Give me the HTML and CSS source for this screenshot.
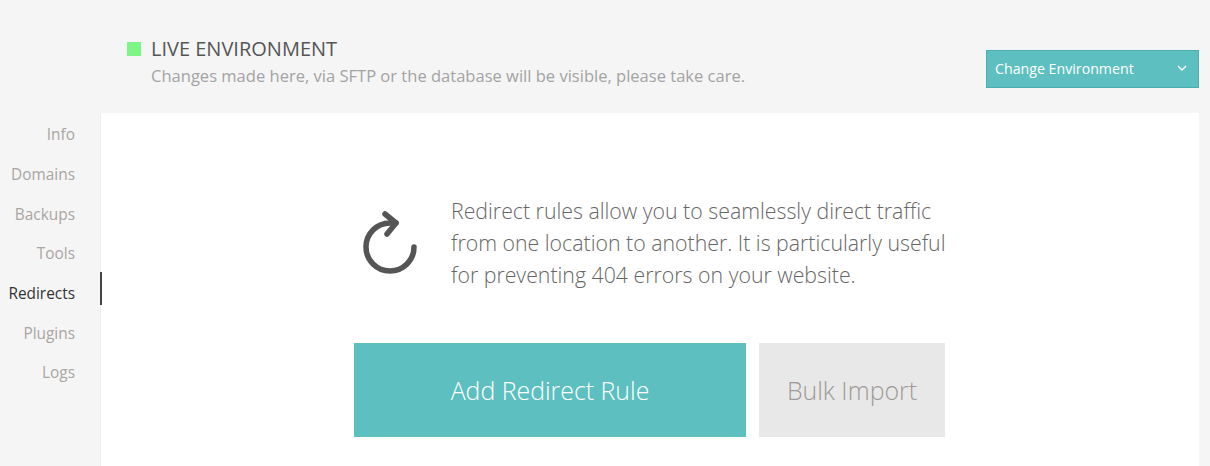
FILE: index.html
```html
<!DOCTYPE html>
<html lang="en">
<head>
    <meta charset="UTF-8">
    <title>Redirects</title>
    <link rel="stylesheet" href="styles.css">
</head>
<body>
    <header class="env-header">
        <span class="env-dot"></span>
        <div class="env-text">
            <h1>LIVE ENVIRONMENT</h1>
            <p>Changes made here, via SFTP or the database will be visible, please take care.</p>
        </div>
        <div class="env-select">
            <span>Change Environment</span>
            <svg width="10" height="6" viewBox="0 0 10 6"><path d="M1 1l4 4 4-4" fill="none" stroke="#fff" stroke-width="1.3"/></svg>
        </div>
    </header>

    <div class="layout">
        <nav class="side-nav">
            <a href="#">Info</a>
            <a href="#">Domains</a>
            <a href="#">Backups</a>
            <a href="#">Tools</a>
            <a href="#" class="active">Redirects</a>
            <a href="#">Plugins</a>
            <a href="#">Logs</a>
        </nav>

        <main class="panel">
            <div class="intro">
                <svg class="intro-icon" width="58" height="66" viewBox="0 0 58 66">
                    <path d="M54 37a24 24 0 1 1-24-24h6" fill="none" stroke="#555" stroke-width="5.5" stroke-linecap="round"/>
                    <path d="M25 4l11 9-9 11" fill="none" stroke="#555" stroke-width="5.5" stroke-linecap="round" stroke-linejoin="round"/>
                </svg>
                <p>Redirect rules allow you to seamlessly direct traffic from one location to another. It is particularly useful for preventing 404 errors on your website.</p>
            </div>
            <div class="actions">
                <a href="#" class="btn btn-primary">Add Redirect Rule</a>
                <a href="#" class="btn btn-muted">Bulk Import</a>
            </div>
        </main>
    </div>
</body>
</html>
```

FILE: styles.css
```css
* {
    box-sizing: border-box;
    margin: 0;
    padding: 0;
    font-family: 'Open Sans', Arial, sans-serif;
}

html, body {
    height: 100%;
}

body {
    background-color: #f5f5f5;
    overflow: hidden;
}

.env-header {
    display: flex;
    align-items: flex-start;
    height: 113px;
    padding: 36px 11px 0 127px;
}

.env-dot {
    width: 14px;
    height: 14px;
    margin-top: 6px;
    margin-right: 10px;
    background: #7df587;
}

.env-text {
    flex: 1;
}

.env-text h1 {
    font-size: 20px;
    line-height: 26px;
    font-weight: 400;
    color: #555;
}

.env-text p {
    font-size: 16.55px;
    line-height: 28px;
    color: #a3a3a3;
}

.env-select {
    display: flex;
    align-items: center;
    justify-content: space-between;
    width: 213px;
    height: 38px;
    margin-top: 14px;
    padding: 0 11px 2px 8px;
    background: #5dbfc0;
    border: 1px solid #4aaeb0;
    color: #fff;
    font-size: 14.2px;
}

.layout {
    display: flex;
    height: 353px;
    padding-right: 11px;
}

.side-nav {
    display: flex;
    flex-direction: column;
    flex-shrink: 0;
    position: relative;
    z-index: 1;
    width: 100px;
    padding-top: 2.3px;
    text-align: right;
}

.side-nav a {
    position: relative;
    height: 39.7px;
    line-height: 39px;
    padding-right: 25px;
    font-size: 15.4px;
    color: #aaa5a2;
    text-decoration: none;
}

.side-nav a.active {
    color: #333;
}

.side-nav a.active::after {
    content: "";
    position: absolute;
    top: -2px;
    right: -2px;
    width: 2px;
    height: 33px;
    background: #444;
}

.panel {
    flex: 1;
    background: #fff;
    border-left: 1px solid #eee;
    padding: 82px 0 0 253px;
}

.intro {
    display: flex;
    align-items: center;
    width: 596px;
}

.intro-icon {
    flex-shrink: 0;
    margin-left: 6px;
    margin-right: 33px;
}

.intro p {
    font-size: 21.3px;
    line-height: 32px;
    font-weight: 300;
    color: #666;
}

.actions {
    display: flex;
    gap: 13px;
    margin-top: 52px;
}

.btn {
    display: flex;
    align-items: center;
    justify-content: center;
    height: 94px;
    font-size: 24.9px;
    font-weight: 300;
    text-decoration: none;
}

.btn-primary {
    width: 392px;
    background: #5dbfc0;
    color: #fff;
}

.btn-muted {
    width: 186px;
    background: #e8e8e8;
    color: #9f9a97;
}
```
